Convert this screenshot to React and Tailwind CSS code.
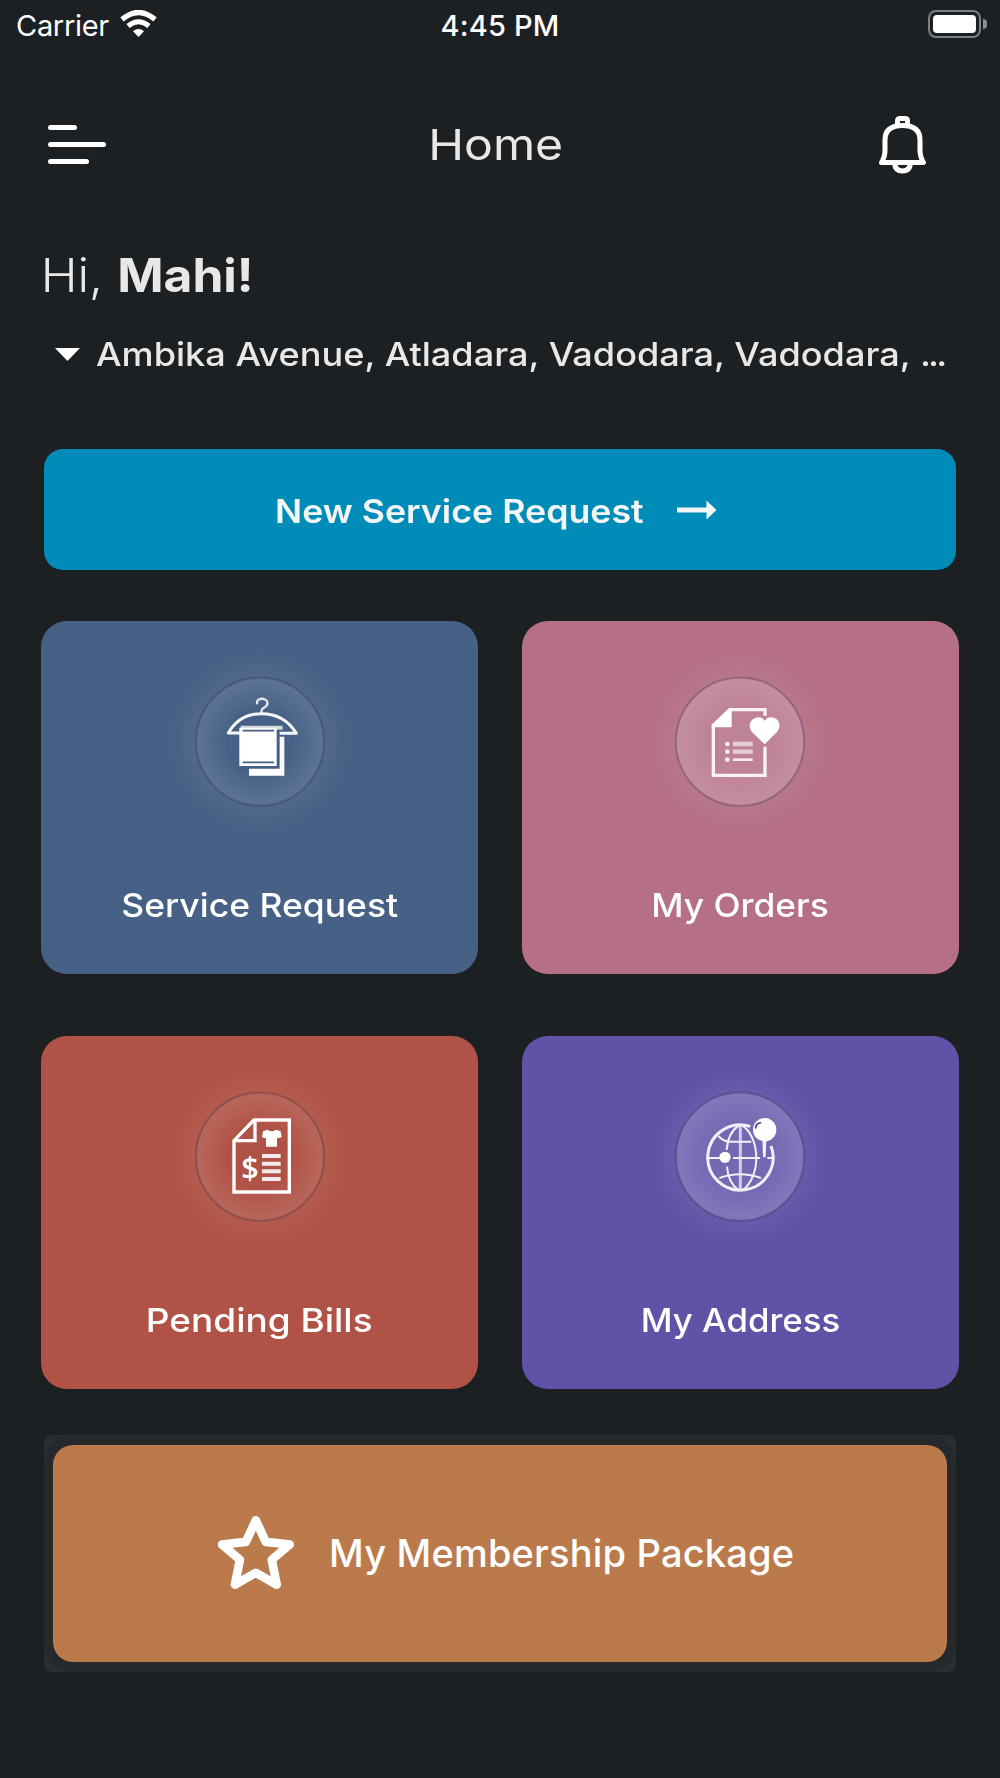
const CARDS = [
  { id: "service", label: "Service Request", bg: "bg-[#476186]", stretch: "scale-x-[1.075]", icon: HangerIcon, inner: 0, rim: 0.12 },
  { id: "orders", label: "My Orders", bg: "bg-[#b57086]", stretch: "scale-x-[1.07]", icon: OrdersIcon, inner: 0.13, rim: 0.22 },
  { id: "bills", label: "Pending Bills", bg: "bg-[#b05346]", stretch: "scale-x-[1.12]", icon: BillIcon, inner: 0, rim: 0.12 },
  { id: "address", label: "My Address", bg: "bg-[#5f52a7]", stretch: "scale-x-[1.055]", icon: GlobeIcon, inner: 0.13, rim: 0.22 },
];

function HangerIcon() {
  return (
    <g>
      <path d="M231 130C230 117 243 115 252 117C265 121 265 134 256 140C246 146 243 149 245 160" fill="none" stroke="#fff" strokeWidth="7" strokeLinecap="round" opacity="0.85" />
      <path d="M186 219H145C166 182 202 161 245 161C290 161 326 182 349 220H299" fill="none" stroke="#fff" strokeWidth="9" strokeLinejoin="round" opacity="0.95" />
      <path d="M182 197H308V209H182Z" fill="#fff" opacity="0.75" />
      <path d="M299 230H313V347H207V326H299Z" fill="#fff" />
      <path d="M178 203H290V318H178Z" fill="#fff" />
      <path d="M188 212H282M188 307H282" stroke="#476186" strokeWidth="5" />
    </g>
  );
}

function OrdersIcon() {
  return (
    <g>
      <path d="M315 167V149H210L160 198V346H315V260" fill="none" stroke="#fff" strokeWidth="10" opacity="0.9" />
      <path d="M208 144H215V202H155V194Z" fill="#fff" />
      <path d="M314 253L276 216C256 190 283 163 307 174L314 182L322 174C347 164 371 190 351 216Z" fill="#fff" />
      <g fill="#fff" opacity="0.85">
        <circle cx="202" cy="252" r="7" />
        <circle cx="202" cy="275" r="7" />
        <circle cx="202" cy="299" r="7" />
      </g>
      <path d="M219 252H278M219 275H278" stroke="#fff" strokeWidth="13" opacity="0.6" />
      <path d="M219 299H278" stroke="#fff" strokeWidth="8" opacity="0.85" />
    </g>
  );
}

function BillIcon() {
  return (
    <g>
      <path d="M222 135H328V351H162V197Z" fill="none" stroke="#fff" strokeWidth="10" />
      <path d="M225 137V197H164" fill="none" stroke="#fff" strokeWidth="10" />
      <path d="M262 164Q275 174 288 164L302 169L305 187L291 190V215H258V190L246 187L249 169Z" fill="#fff" />
      <text x="210" y="311" textAnchor="middle" fontFamily="Open Sans, sans-serif" fontSize="92" fontWeight="600" fill="#fff">$</text>
      <path d="M246 243H302M246 266H302M246 289H302M246 312H302" stroke="#fff" strokeWidth="12" opacity="0.88" />
    </g>
  );
}

function GlobeIcon() {
  return (
    <g>
      <g fill="none" stroke="#fff" strokeWidth="6" opacity="0.9">
        <path d="M271 154A98 98 0 1 0 333 213" strokeWidth="9" />
        <path d="M241 150V346" strokeWidth="9" opacity="0.75" />
        <path d="M139 249H180M219 249H300M322 249H343" />
        <path d="M236 152C214 166 203 190 200 225M201 275C203 305 214 330 236 346" />
        <path d="M248 152C300 190 305 300 248 346" />
        <path d="M175 183Q190 200 212 200H274M178 309Q240 286 303 309" />
      </g>
      <circle cx="195" cy="247" r="17" fill="#fff" />
      <path d="M307 190H319L317 247H309Z" fill="#fff" opacity="0.9" />
      <circle cx="314" cy="164" r="35" fill="#fff" />
      <path d="M287 158Q289 145 301 143" fill="none" stroke="#5f52a7" strokeWidth="6" strokeLinecap="round" />
    </g>
  );
}

function ServiceCard({ card }) {
  const Icon = card.icon;
  return (
    <button className={`flex flex-col items-center rounded-[26px] pt-[39px] ${card.bg}`}>
      <svg viewBox="0 0 480 480" className="h-40 w-40 overflow-visible">
        <defs>
          <radialGradient id={`glow-${card.id}`}>
            <stop offset="0.68" stopColor="#fff" stopOpacity="0.055" />
            <stop offset="0.85" stopColor="#fff" stopOpacity="0.022" />
            <stop offset="1" stopColor="#fff" stopOpacity="0" />
          </radialGradient>
          <radialGradient id={`disc-${card.id}`}>
            <stop offset="0.5" stopColor="#fff" stopOpacity={card.inner} />
            <stop offset="1" stopColor="#fff" stopOpacity={card.rim} />
          </radialGradient>
          <mask id={`ring-${card.id}`}>
            <rect x="-80" y="-80" width="640" height="640" fill="#fff" />
            <circle cx="240" cy="245" r="192" fill="#000" />
          </mask>
        </defs>
        <circle cx="240" cy="245" r="280" fill={`url(#glow-${card.id})`} mask={`url(#ring-${card.id})`} />
        <circle cx="240" cy="245" r="192" fill={`url(#disc-${card.id})`} />
        <circle cx="240" cy="245" r="192" fill="none" stroke="#2b2540" strokeOpacity="0.1" strokeWidth="9" />
        <circle cx="240" cy="245" r="192" fill="none" stroke="#2b2540" strokeOpacity="0.22" strokeWidth="4" />
        <Icon />
      </svg>
      <span className={`mt-[55px] text-[33px] leading-[60px] font-medium text-white ${card.stretch}`}>{card.label}</span>
    </button>
  );
}

function StatusBar() {
  return (
    <div className="grid h-[50px] grid-cols-3 items-center pr-[13px] pl-4 text-[29px] text-white">
      <div className="flex items-center gap-[11px]">
        <span className="pt-px tracking-[-0.3px]">Carrier</span>
        <svg viewBox="0 0 37 27" className="mb-[3px] h-[27px] w-[37px]">
          <path d="M2 9.5Q18.500 -4.500 35 9.500" fill="none" stroke="#fff" strokeWidth="5.200" />
          <path d="M8 16Q18.500 7.500 29 16" fill="none" stroke="#fff" strokeWidth="5" />
          <path d="M18.500 27L13 21.300Q18.500 16.500 24 21.300Z" fill="#fff" />
        </svg>
      </div>
      <span className="pt-px pr-[3px] text-center font-medium tracking-[0.2px] whitespace-nowrap">4:45 PM</span>
      <div className="flex items-center justify-end gap-0.5 pb-0.5">
        <div className="h-7 w-[53px] rounded-lg border-2 border-[#7c7e80] p-[3px]">
          <div className="h-full rounded bg-white" />
        </div>
        <div className="h-2.5 w-[4px] rounded-r-full bg-[#8a8c8e]" />
      </div>
    </div>
  );
}

export default function App() {
  return (
    <div className="flex h-[1778px] w-[1000px] flex-col overflow-hidden bg-[#1d2023] font-['Inter',sans-serif] text-[#e8e8e8]">
      <StatusBar />

      {/* Title bar */}
      <header className="grid h-[189px] grid-cols-3 items-center pr-[74px] pl-12">
        <button className="flex flex-col gap-3">
          <span className="h-[5px] w-[29px] rounded-sm bg-white" />
          <span className="h-[5px] w-[58px] rounded-sm bg-white" />
          <span className="h-[5px] w-[41px] rounded-sm bg-white" />
        </button>
        <h1 className="scale-x-[1.12] pl-[15px] text-center text-[43px]">Home</h1>
        <button className="flex justify-end">
          <svg viewBox="0 0 47 58" className="h-[58px] w-[47px]" fill="none" stroke="#fff" strokeWidth="5" strokeLinejoin="round">
            <path d="M18.500 10V5Q18.500 2.500 21 2.500H26Q28.500 2.500 28.500 5V10" />
            <path d="M2.500 46.500Q6 41 6 34V24Q6 9.500 23.500 9.500Q41 9.500 41 24V34Q41 41 44.500 46.500Z" />
            <path d="M15.500 47Q16 55 23.500 55Q31 55 31.500 47" />
          </svg>
        </button>
      </header>

      {/* Greeting and selected address */}
      <p className="origin-left scale-x-[1.07] pl-[38px] text-[46.500px] leading-[73px] font-light">
        Hi, <span className="font-bold">Mahi!</span>
      </p>
      <div className="flex h-[85px] items-center pl-[55px]">
        <svg viewBox="0 0 25 13" className="h-[13px] w-[25px]">
          <path d="M0 0H25L12.500 13Z" fill="#fff" />
        </svg>
        <span className="ml-[16px] origin-left scale-x-[1.094] pt-px text-[33px] font-medium whitespace-nowrap">
          Ambika Avenue, Atladara, Vadodara, Vadodara, <span className="tracking-[-2.5px]">...</span>
        </span>
      </div>

      <button className="mx-11 mt-[52px] flex h-[121px] shrink-0 items-center rounded-[19px] bg-[#008cb8] pl-[231px] text-[#f4f6f7]">
        <span className="w-[402px] pt-[4px] text-left">
          <span className="inline-block origin-left scale-x-[1.083] text-[33px] font-semibold whitespace-nowrap">New Service Request</span>
        </span>
        <svg viewBox="0 0 40 20" className="h-5 w-10" fill="currentColor">
          <path d="M0 7.500H29.500V0.500L39.500 10L29.500 19.500V12.500H0Z" />
        </svg>
      </button>

      <div className="mx-[41px] mt-[51px] grid shrink-0 auto-rows-[352.5px] grid-cols-2 gap-x-[43.5px] gap-y-[62.5px]">
        {CARDS.map((card) => (
          <ServiceCard key={card.id} card={card} />
        ))}
      </div>

      {/* Membership banner */}
      <div className="mx-11 mt-[46.5px] h-[237px] shrink-0 rounded-lg bg-[#2b2e31]">
        <div className="h-full rounded-[28px] bg-[#25292c] px-[9px] pt-[9.5px] pb-[10px]">
          <button className="flex h-full w-full items-center rounded-[20px] bg-[#ba7a4c] pl-[165px] text-white">
            <svg viewBox="594 287 229 220" className="mb-0.5 h-[73px] w-[76px]" fill="none" stroke="#fff" strokeWidth="26" strokeLinejoin="round">
              <path d="M708 300L738 365L810 373L756 419L771 494L708 458L645 494L660 419L606 373L678 365Z" />
            </svg>
            <span className="ml-[35px] text-[38px] font-medium tracking-[0.2px] whitespace-nowrap">My Membership Package</span>
          </button>
        </div>
      </div>
    </div>
  );
}
